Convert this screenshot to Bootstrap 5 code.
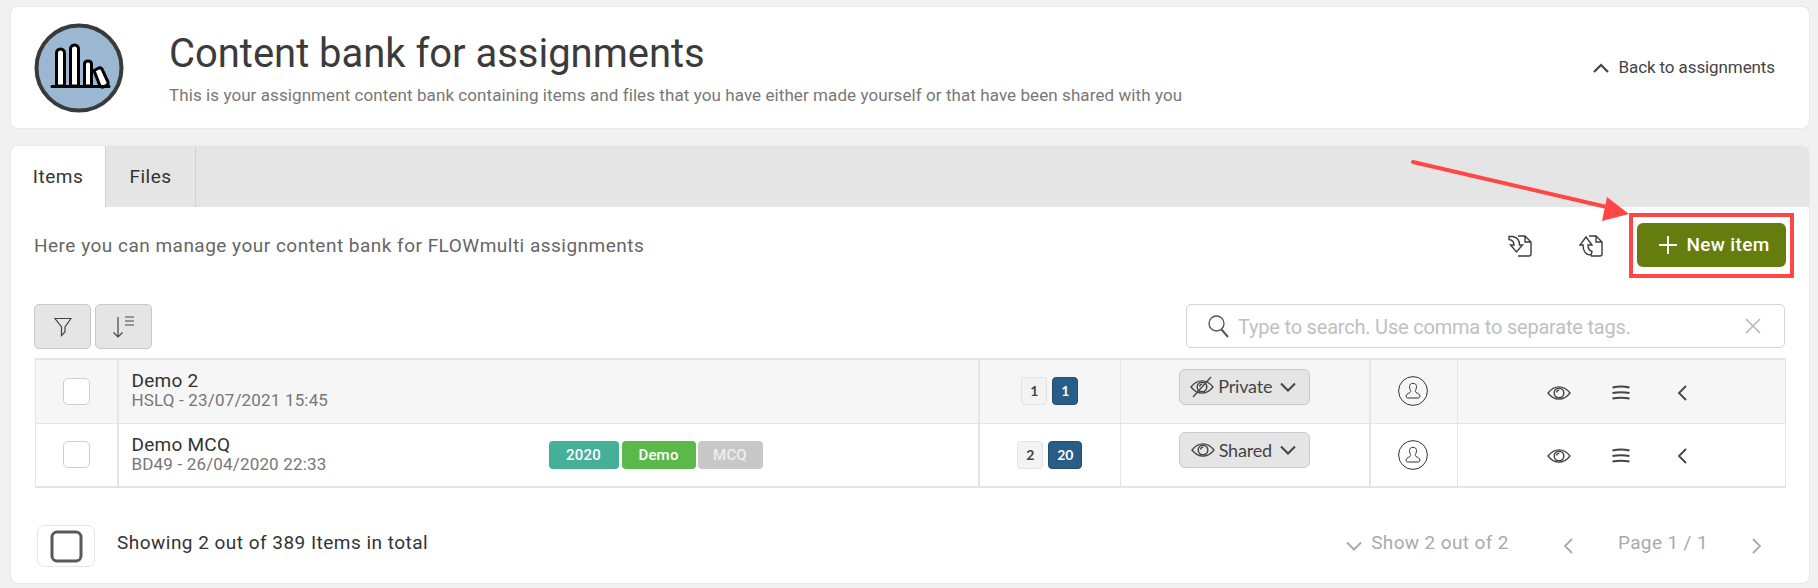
<!DOCTYPE html>
<html lang="en">
<head>
<meta charset="utf-8">
<title>Content bank for assignments</title>
<link href="https://cdn.jsdelivr.net/npm/bootstrap@5.3.0/dist/css/bootstrap.min.css" rel="stylesheet">
<style>
html,body{height:100%;}
body{background:#f1f1f1;padding:7px 9px 0 11px;font-family:"Roboto",sans-serif;color:#3d3d3d;overflow:hidden;}
.panel-box{background:#fff;border-radius:7px;box-shadow:0 0 0 1px #e9e9e9;}
.head-panel{height:121px;padding-left:23px;padding-right:34px;}
.logo-mark{width:90px;height:90px;flex:none;margin-right:45px;}
.page-title{font-size:40px;line-height:48px;font-weight:400;color:#3b3b3b;margin:0 0 7px;letter-spacing:-.03px;}
.page-sub{font-size:17px;line-height:20px;color:#777;letter-spacing:.08px;margin:0;}
.back-link{font-size:17px;color:#444;text-decoration:none;letter-spacing:-.1px;gap:10px;}
.main-panel{margin-top:18px;height:437px;position:relative;}
.tab-strip{height:61px;background:#e5e5e5;border-radius:7px 7px 0 0;}
.tab-item{font-size:19px;letter-spacing:.5px;color:#333;height:61px;border-right:1px solid #d2d2d2;line-height:61px;text-align:center;text-decoration:none;}
.tab-on{width:95px;background:#fff;border-radius:7px 0 0 0;}
.tab-off{width:90px;}
.intro-row{height:97px;padding:6px 23px 26px 23px;}
.intro-text{font-size:19px;letter-spacing:.49px;color:#666;margin:1px 0 0;}
.doc-ico{width:24px;height:22px;color:#3d3d3d;}
.doc-one{margin-right:47px;}
.doc-two{margin-right:26px;}
.add-wrap{padding:6px 4px 7px;border:4px solid #ff4747;margin-right:-8px;}
.add-btn{width:149px;height:44px;background:#647d0e;border:0;border-radius:6px;color:#fff;font-size:19px;font-weight:500;letter-spacing:.35px;gap:9px;padding:0 0 0 6px;}
.tool-row{height:45px;padding:0 24px 0 23px;}
.tool-btn{width:57px;height:45px;background:#e5e5e5;border:1px solid #cacaca;border-radius:5px;padding:0;margin-right:4px;color:#444;}
.search-box{width:599px;height:44px;border:1px solid #d4d4d4;border-radius:5px;padding:0 23px 0 21px;gap:9px;}
.glass-ico{color:#555;}
.clear-ico{color:#b5b5b5;}
.search-field{border:0;outline:0;flex:1;min-width:0;font-size:20px;letter-spacing:-.2px;color:#444;background:transparent;font-family:inherit;padding:1px 0 0;}
.search-field::placeholder{color:#c0c0c0;opacity:1;}
.item-table{margin:9px 24px 0 24px;width:1750px;table-layout:fixed;border-collapse:collapse;border-top:2px solid #e5e5e5;border-bottom:2px solid #e5e5e5;}
.item-table td{padding:0;height:64px;vertical-align:middle;border-right:1px solid #e5e5e5;border-bottom:1px solid #e5e5e5;}
.item-table tr:last-child td{border-bottom:0;}
.item-table td:first-child{border-left:1px solid #e5e5e5;}
.item-table td.thick-edge{border-right:2px solid #e5e5e5;}
.shade-row td{background:#f6f6f6;}
.tick-box{width:27px;height:27px;background:#fff;border:1px solid #cfcfcf;border-radius:5px;display:block;margin:0 auto;}
.name-block{width:430px;padding-left:13px;flex:none;margin-top:-1px;}
.item-name{font-size:19px;line-height:20px;color:#333;letter-spacing:.25px;}
.item-meta{font-size:17px;line-height:19px;color:#777;letter-spacing:.17px;}
.tag-chip{height:28px;line-height:28px;font-size:15px;font-weight:500;color:#fff;text-align:center;border-radius:4px;margin-right:3px;letter-spacing:.2px;}
.tag-a{width:70px;background:#45b097;}
.tag-b{width:74px;background:#5bb84a;margin-right:2px;}
.tag-c{width:65px;background:#c8c8c8;color:#eee;}
.count-chip{height:28px;line-height:26px;border-radius:4px;font-family:"Lato",sans-serif;font-size:14px;font-weight:700;text-align:center;border:1px solid #e2e2e2;background:#f3f3f3;color:#444;min-width:26px;}
.count-blue{background:#285d87;border-color:#234f72;color:#fff;}
.gap-five{gap:5px;}
.wide-chip{width:34px;}
.vis-btn{width:131px;height:36px;background:#e5e5e5;border:1px solid #cacaca;border-radius:6px;font-family:"Lato",sans-serif;font-size:18px;color:#444;padding:0 3px 0 0;gap:4px;margin:0 auto 9px;letter-spacing:-.2px;}
.avatar-cell{padding-right:2px !important;}
.avatar-ico{width:30px;height:30px;color:#333;display:block;margin:0 auto;}
.act-row{padding:3px 0 0 89px;height:100%;}
.act-eye{width:24px;height:14px;margin-right:41px;color:#444;}
.act-menu{width:18px;height:16px;margin-right:47px;color:#444;}
.act-back{width:10px;height:16px;color:#444;}
.foot-row{padding:37px 47px 0 26px;}
.foot-check{width:58px;height:42px;border:1px solid #e5e5e5;border-radius:7px;margin-right:22px;}
.foot-text{font-size:19px;letter-spacing:.48px;color:#333;margin-bottom:5px;}
.foot-dim{font-size:19px;letter-spacing:.38px;color:#aaa;margin-bottom:5px;}
.dim-ico{color:#aaa;}
.gap-nine{margin-right:9px;}
.gap-show{margin-right:54px;}
.gap-page{margin:0 44px 5px 45px;}
.ann-arrow{position:absolute;left:0;top:0;width:1798px;height:437px;pointer-events:none;}
.ann-arrow line{stroke:#ff4747;stroke-width:4;stroke-linecap:round;}
.ann-arrow polygon{fill:#ff4747;}
svg.stroke-ico{fill:none;stroke:currentColor;}
</style>
</head>
<body>
<svg width="0" height="0" class="d-block position-absolute">
  <symbol id="eye" viewBox="0 0 24 14"><path d="M1 7C4.500 2.500 8 .8 12 .8S19.500 2.500 23 7C19.500 11.500 16 13.200 12 13.200S4.500 11.500 1 7Z" fill="none" stroke="currentColor" stroke-width="1.300"/><circle cx="12" cy="7" r="4.800" fill="none" stroke="currentColor" stroke-width="1.500"/><path d="M9.500 6.500C9.800 5 11 4.200 12.300 4.200" fill="none" stroke="currentColor" stroke-width="1.300"/></symbol>
  <symbol id="chev-down" viewBox="0 0 16 10"><path d="M1 1.500L8 8.500L15 1.500" fill="none" stroke="currentColor" stroke-width="2"/></symbol>
  <symbol id="chev-left" viewBox="0 0 10 16"><path d="M9 1L2 8L9 15" fill="none" stroke="currentColor" stroke-width="1.800"/></symbol>
  <symbol id="menu-lines" viewBox="0 0 18 16"><path d="M.5 2.500Q9 .5 17.500 2.500M.5 8Q9 6.500 17.500 8M.5 13.500Q9 12 17.500 13.500" fill="none" stroke="currentColor" stroke-width="2"/></symbol>
  <symbol id="person" viewBox="0 0 30 30"><circle cx="15" cy="15" r="14.400" fill="none" stroke="currentColor" stroke-width="1"/><path d="M11.500 10.500C11.500 8.500 13 7.300 15 7.300S18.500 8.500 18.500 10.500C18.500 13 17.300 14.300 17.300 15.500C17.300 17 22 17.500 22 20C22 21.500 21 22 20 22H10C9 22 8 21.500 8 20C8 17.500 12.700 17 12.700 15.500C12.700 14.300 11.500 13 11.500 10.500Z" fill="none" stroke="currentColor" stroke-width="1"/></symbol>
</svg>

<section class="panel-box head-panel d-flex align-items-center">
  <svg class="logo-mark" viewBox="0 0 90 90">
    <circle cx="45" cy="45" r="42.500" fill="#9ab8d2" stroke="#3a3a3a" stroke-width="4"/>
    <g fill="#fff" stroke="#000" stroke-width="3">
      <path d="M22.500 63V30a4 4 0 0 1 8 0V63Z"/>
      <path d="M36.500 63V26a4 4 0 0 1 8 0V63Z"/>
      <path d="M50.500 63V41q0-3 3.500-3t3.500 3V63Z"/>
      <path d="M60 47.500l5-2.500q2-.5 3 1l6 13q.500 2-1 3l-4 2q-2 .5-3-1Z"/>
    </g>
    <path d="M18 63.500H75" stroke="#000" stroke-width="3" stroke-linecap="round"/>
  </svg>
  <div class="flex-grow-1">
    <h1 class="page-title">Content bank for assignments</h1>
    <p class="page-sub">This is your assignment content bank containing items and files that you have either made yourself or that have been shared with you</p>
  </div>
  <a href="#" class="back-link d-flex align-items-center">
    <svg width="16" height="10" viewBox="0 0 16 10" class="stroke-ico" stroke-width="2.200"><path d="M1 9L8 2L15 9"/></svg>
    <span>Back to assignments</span>
  </a>
</section>

<section class="panel-box main-panel">
  <nav class="tab-strip d-flex">
    <a href="#" class="tab-item tab-on">Items</a>
    <a href="#" class="tab-item tab-off">Files</a>
  </nav>

  <div class="intro-row d-flex align-items-center">
    <p class="intro-text flex-grow-1">Here you can manage your content bank for FLOWmulti assignments</p>
    <svg class="doc-ico doc-one stroke-ico" viewBox="0 0 24 22" stroke-width="1.400"><path d="M10 1H17L23 7V19Q23 21 21 21H10M17 1V7H23"/><path d="M1 1.500H5C9.500 2.500 11.500 5.500 11.500 10H14.500L8.500 17L2.500 10H6C6 7 4.500 5 1 4.500Z" fill="#fff"/></svg>
    <svg class="doc-ico doc-two stroke-ico" viewBox="0 0 24 22" stroke-width="1.400"><path d="M10 1H17L23 7V19Q23 21 21 21H12M17 1V7H23"/><path d="M12 20C6.500 20 4 15.500 4 10H1L7 2L13 10H9C9 13 10 15.500 13 16.500Z" fill="#fff"/></svg>
    <div class="add-wrap">
      <button type="button" class="add-btn d-flex align-items-center justify-content-center">
        <svg width="18" height="18" viewBox="0 0 18 18" class="stroke-ico" stroke-width="2"><path d="M9 0V18M0 9H18"/></svg>
        <span>New item</span>
      </button>
    </div>
  </div>

  <div class="tool-row d-flex justify-content-between">
    <div class="d-flex">
      <button type="button" class="tool-btn d-flex align-items-center justify-content-center" aria-label="Filter">
        <svg width="18" height="20" viewBox="0 0 18 20" class="stroke-ico" stroke-width="1.200"><path d="M1 1.500H17L11 10V15L7.500 18.500V10Z"/></svg>
      </button>
      <button type="button" class="tool-btn d-flex align-items-center justify-content-center" aria-label="Sort">
        <svg width="24" height="24" viewBox="0 0 24 24" class="stroke-ico" stroke-width="1.200"><path d="M6 2V22M1.500 17.500L6 22L10.500 17.500M13 2H22M13 6H22M13 10H22"/></svg>
      </button>
    </div>
    <div class="search-box d-flex align-items-center">
      <svg width="21" height="23" viewBox="0 0 21 23" class="stroke-ico glass-ico" stroke-width="1.300"><circle cx="8.500" cy="8.500" r="7.500"/><path d="M13.500 14.500L20 22" stroke-width="2"/></svg>
      <input class="search-field" type="text" placeholder="Type to search. Use comma to separate tags." aria-label="Search">
      <svg width="16" height="16" viewBox="0 0 16 16" class="stroke-ico clear-ico" stroke-width="1.500"><path d="M1 1L15 15M15 1L1 15"/></svg>
    </div>
  </div>

  <table class="item-table">
    <colgroup><col width="82"><col width="861"><col width="142"><col width="249"><col width="88"><col width="328"></colgroup>
    <tr class="shade-row">
      <td class="thick-edge"><span class="tick-box"></span></td>
      <td class="thick-edge">
        <div class="d-flex align-items-center">
          <div class="name-block"><div class="item-name">Demo 2</div><div class="item-meta">HSLQ - 23/07/2021 15:45</div></div>
        </div>
      </td>
      <td><div class="d-flex justify-content-center gap-five"><span class="count-chip">1</span><span class="count-chip count-blue">1</span></div></td>
      <td class="thick-edge">
        <button type="button" class="vis-btn d-flex align-items-center justify-content-center">
          <svg width="24" height="24" viewBox="0 0 24 24"><use href="#eye" x="0" y="5" width="24" height="14"/><path d="M3 22L21 2" fill="none" stroke="currentColor" stroke-width="1.300"/></svg>
          <span>Private</span>
          <svg width="16" height="10" class="ms-1"><use href="#chev-down"/></svg>
        </button>
      </td>
      <td class="avatar-cell"><svg class="avatar-ico"><use href="#person"/></svg></td>
      <td>
        <div class="act-row d-flex align-items-center">
          <svg class="act-eye"><use href="#eye"/></svg><svg class="act-menu"><use href="#menu-lines"/></svg><svg class="act-back"><use href="#chev-left"/></svg>
        </div>
      </td>
    </tr>
    <tr>
      <td class="thick-edge"><span class="tick-box"></span></td>
      <td class="thick-edge">
        <div class="d-flex align-items-center">
          <div class="name-block"><div class="item-name">Demo MCQ</div><div class="item-meta">BD49 - 26/04/2020 22:33</div></div>
          <span class="tag-chip tag-a">2020</span><span class="tag-chip tag-b">Demo</span><span class="tag-chip tag-c">MCQ</span>
        </div>
      </td>
      <td><div class="d-flex justify-content-center gap-five"><span class="count-chip">2</span><span class="count-chip count-blue wide-chip">20</span></div></td>
      <td class="thick-edge">
        <button type="button" class="vis-btn d-flex align-items-center justify-content-center">
          <svg width="24" height="14"><use href="#eye"/></svg>
          <span>Shared</span>
          <svg width="16" height="10" class="ms-1"><use href="#chev-down"/></svg>
        </button>
      </td>
      <td class="avatar-cell"><svg class="avatar-ico"><use href="#person"/></svg></td>
      <td>
        <div class="act-row d-flex align-items-center">
          <svg class="act-eye"><use href="#eye"/></svg><svg class="act-menu"><use href="#menu-lines"/></svg><svg class="act-back"><use href="#chev-left"/></svg>
        </div>
      </td>
    </tr>
  </table>

  <div class="foot-row d-flex align-items-center">
    <div class="foot-check d-flex align-items-center justify-content-center">
      <svg width="33" height="33" viewBox="0 0 33 33"><rect x="2" y="2" width="29" height="29" rx="5" fill="none" stroke="#595959" stroke-width="3"/></svg>
    </div>
    <span class="foot-text flex-grow-1">Showing 2 out of 389 Items in total</span>
    <svg width="16" height="10" class="gap-nine dim-ico"><use href="#chev-down"/></svg>
    <span class="foot-dim gap-show">Show 2 out of 2</span>
    <svg class="act-back dim-ico"><use href="#chev-left"/></svg>
    <span class="foot-dim gap-page">Page 1 / 1</span>
    <svg width="10" height="16" viewBox="0 0 10 16" class="stroke-ico dim-ico" stroke-width="1.800"><path d="M1 1L8 8L1 15"/></svg>
  </div>

  <svg class="ann-arrow" viewBox="0 0 1798 437">
    <line x1="1402" y1="16" x2="1600" y2="62"/>
    <polygon points="1596,51 1591,75 1618,68"/>
  </svg>
</section>
<script src="https://cdn.jsdelivr.net/npm/bootstrap@5.3.0/dist/js/bootstrap.bundle.min.js"></script>
</body>
</html>
